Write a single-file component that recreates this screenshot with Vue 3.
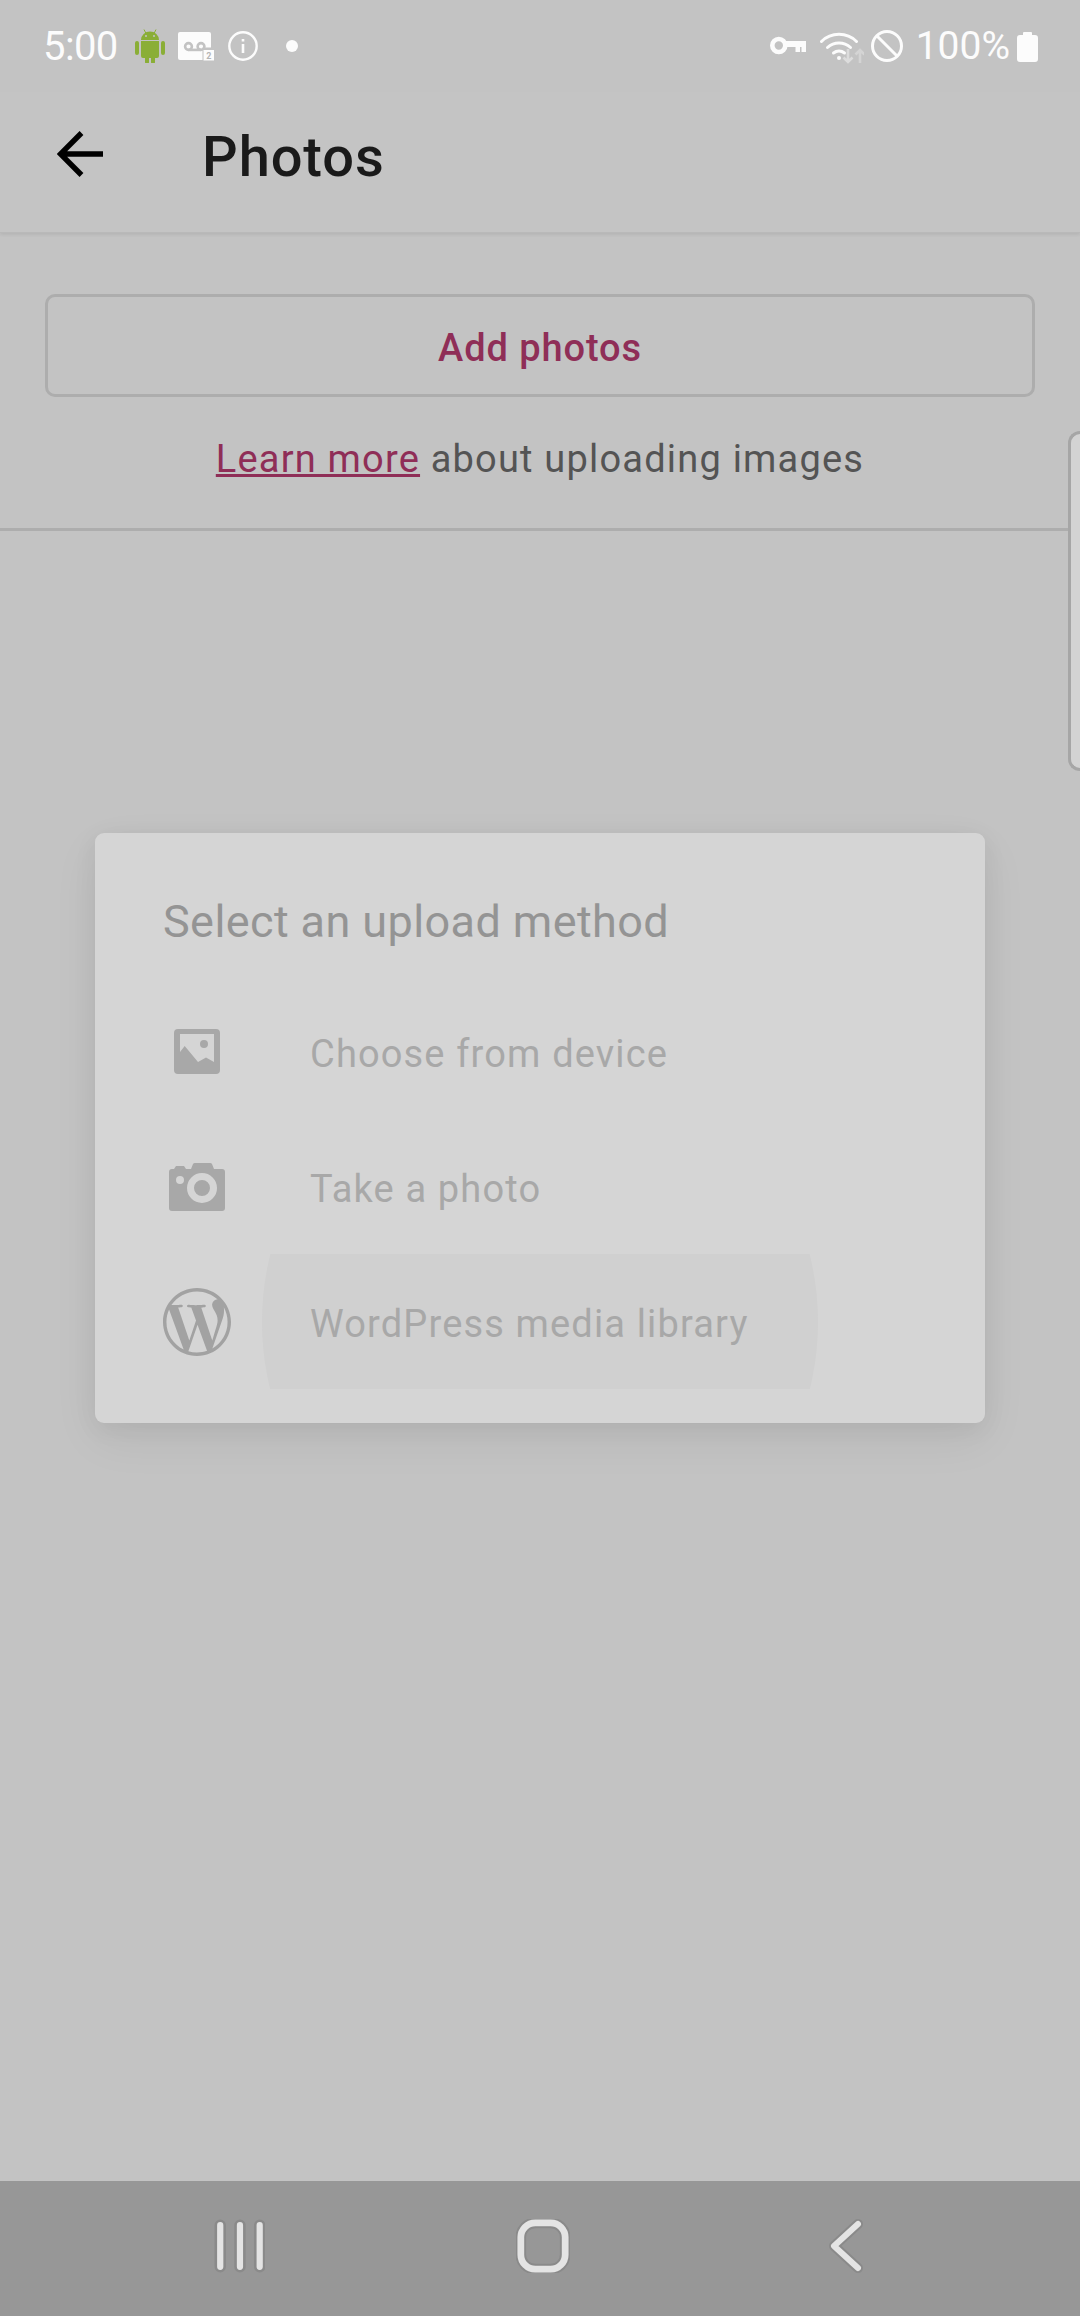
<script setup>
const rows = [
  { key: 'device', label: 'Choose from device' },
  { key: 'camera', label: 'Take a photo' },
  { key: 'wp', label: 'WordPress media library', pressed: true }
]
</script>

<template>
  <div class="screen">
    <div class="status-bar">
      <span class="clock">5:00</span>
      <svg class="ic-android" viewBox="0 0 30 34">
        <path fill="#8aae36" d="M6 11a9 8.500 0 0 1 18 0zM6 12h18v15a2 2 0 0 1-2 2h-2v4a2 2 0 0 1-4 0v-4h-2v4a2 2 0 0 1-4 0v-4H8a2 2 0 0 1-2-2zM0 14a2 2 0 0 1 4 0v10a2 2 0 0 1-4 0zM26 14a2 2 0 0 1 4 0v10a2 2 0 0 1-4 0z" />
        <path stroke="#8aae36" stroke-width="1" d="M9 0.500l2 4M21 0.500l-2 4" />
        <circle cx="11" cy="7" r="1" fill="#c3c3c3" />
        <circle cx="19" cy="7" r="1" fill="#c3c3c3" />
      </svg>
      <svg class="ic-voicemail" viewBox="0 0 36 29">
        <rect x="0" y="0" width="33" height="28" rx="2" fill="#fcfcfc" />
        <g fill="none" stroke="#c3c3c3" stroke-width="2.600">
          <circle cx="10.500" cy="14.500" r="3.400" />
          <circle cx="23" cy="14.500" r="3.400" />
          <path d="M10.500 17.900H23" />
        </g>
        <path fill="#c3c3c3" d="M24.500 15.500H33V29h-8.500z" />
        <rect x="25.500" y="18" width="10.500" height="10.500" fill="#fcfcfc" />
        <text x="30.800" y="27" class="vm-badge">2</text>
      </svg>
      <svg class="ic-info" viewBox="0 0 30 30">
        <circle cx="15" cy="15" r="13.700" fill="none" stroke="#fcfcfc" stroke-width="2.400" />
        <path fill="#fcfcfc" d="M13.700 13h2.600v9h-2.600zM13.700 8h2.600v2.600h-2.600z" />
      </svg>
      <span class="dot"></span>
      <span class="spacer"></span>
      <svg class="ic-key" viewBox="0 0 36 20">
        <circle cx="8.800" cy="9.500" r="6.500" fill="none" stroke="#fcfcfc" stroke-width="4.600" />
        <path fill="#fcfcfc" d="M15 5h21v11h-4.500v-5H30v5h-4.500v-5H15z" />
      </svg>
      <svg class="ic-wifi" viewBox="0 0 44 32">
        <g fill="none" stroke="#fcfcfc" stroke-width="3" stroke-linecap="round">
          <path d="M1.500 9.500a25 25 0 0 1 35 0" />
          <path d="M7.500 15.500a17 17 0 0 1 23 0" />
          <path d="M13.500 21a9 9 0 0 1 11 0" />
        </g>
        <circle cx="19" cy="26" r="2" fill="#fcfcfc" />
        <path fill="none" stroke="#dcdcdc" stroke-width="2.600" d="M28 17v13M23.500 25.500l4.500 4.500 4.500-4.500" />
        <path fill="none" stroke="#d4d4d4" stroke-width="2.600" d="M40 31V18M35.500 22.500l4.500-4.500 4.500 4.500" />
      </svg>
      <svg class="ic-block" viewBox="0 0 32 32">
        <circle cx="16" cy="16" r="14.500" fill="none" stroke="#fcfcfc" stroke-width="3" />
        <path stroke="#fcfcfc" stroke-width="3" d="M6 6l20 20" />
      </svg>
      <span class="battery-text">100%</span>
      <svg class="ic-battery" viewBox="0 0 21 31">
        <path fill="#fcfcfc" d="M6 2a1 1 0 0 1 1-1h7a1 1 0 0 1 1 1v2h3a3 3 0 0 1 3 3v21a3 3 0 0 1-3 3H3a3 3 0 0 1-3-3V7a3 3 0 0 1 3-3h3z" />
      </svg>
    </div>

    <header class="toolbar">
      <svg class="ic-back" viewBox="0 0 46 46">
        <path fill="none" stroke="#000" stroke-width="5.400" d="M46 23H4M24.500 2L3.500 23l21 21" />
      </svg>
      <h1 class="title">Photos</h1>
    </header>

    <section class="upload-head">
      <button class="add-btn">Add photos</button>
      <p class="learn"><a class="learn-link">Learn more</a> about uploading images</p>
    </section>

    <main class="body"></main>

    <nav class="nav-bar">
      <svg class="ic-nav" viewBox="0 0 50 52">
        <g fill="none" stroke-linecap="round">
          <path stroke="#8a8a8a" stroke-width="11" d="M6 6v40M25 6v40M44 6v40" />
          <path stroke="#e4e4e4" stroke-width="6" d="M6 6v40M25 6v40M44 6v40" />
        </g>
      </svg>
      <svg class="ic-nav" viewBox="0 0 56 56">
        <rect x="5" y="4" width="46" height="48" rx="15" fill="none" stroke="#8a8a8a" stroke-width="11" />
        <rect x="5" y="4" width="46" height="48" rx="15" fill="none" stroke="#e4e4e4" stroke-width="7" />
      </svg>
      <svg class="ic-nav" viewBox="0 0 36 54">
        <path fill="none" stroke="#8a8a8a" stroke-width="10" stroke-linecap="round" stroke-linejoin="round" d="M30 5L6 27l24 22" />
        <path fill="none" stroke="#e4e4e4" stroke-width="6" stroke-linecap="round" stroke-linejoin="round" d="M30 5L6 27l24 22" />
      </svg>
    </nav>

    <div class="side-tab"></div>

    <div class="dialog">
      <h2 class="dialog-title">Select an upload method</h2>
      <div v-for="row in rows" :key="row.key" class="row">
        <span v-if="row.pressed" class="ripple"></span>
        <span class="row-icon">
          <svg v-if="row.key === 'device'" class="ic-image" viewBox="0 0 46 45">
            <path fill="#a8a8a8" fill-rule="evenodd" d="M4 0h38a4 4 0 0 1 4 4v37a4 4 0 0 1-4 4H4a4 4 0 0 1-4-4V4a4 4 0 0 1 4-4zM6 5v18l4.700-6L24 33l8-4.500 8 4.500V5zm24 6a4 4 0 1 1 0 8 4 4 0 0 1 0-8z" />
          </svg>
          <svg v-else-if="row.key === 'camera'" class="ic-camera" viewBox="0 0 56 48">
            <path fill="#a8a8a8" fill-rule="evenodd" d="M3 6h2l2-3h8l2 3h5l2-5q.5-1 2-1h15q1.500 0 2 1l2 5h8a3 3 0 0 1 3 3v36a3 3 0 0 1-3 3H3a3 3 0 0 1-3-3V9a3 3 0 0 1 3-3zm8 7a4 4 0 1 0 0 8 4 4 0 0 0 0-8zm22-3a15 15 0 1 0 0 30 15 15 0 0 0 0-30zm0 7a8 8 0 1 1 0 16 8 8 0 0 1 0-16z" />
          </svg>
          <svg v-else class="ic-wp" viewBox="0 0 24 24">
            <path fill="#a2a2a2" d="M21.469 6.825c.84 1.537 1.318 3.3 1.318 5.175 0 3.979-2.156 7.456-5.363 9.325l3.295-9.527c.615-1.54.82-2.771.82-3.864 0-.405-.026-.78-.07-1.11m-7.981.105c.647-.03 1.232-.105 1.232-.105.582-.075.514-.93-.067-.899 0 0-1.755.135-2.88.135-1.064 0-2.85-.15-2.85-.15-.585-.03-.661.855-.075.885 0 0 .54.061 1.125.09l1.68 4.605-2.37 7.08L5.354 6.9c.649-.03 1.234-.1 1.234-.1.585-.075.516-.93-.065-.896 0 0-1.746.138-2.874.138-.2 0-.438-.008-.69-.015C4.911 3.15 8.235 1.215 12 1.215c2.809 0 5.365 1.072 7.286 2.833-.046-.003-.091-.009-.141-.009-1.06 0-1.812.923-1.812 1.914 0 .89.513 1.643 1.06 2.531.411.72.89 1.643.89 2.977 0 .915-.354 1.994-.821 3.479l-1.075 3.585-3.9-11.61.001.014zM12 22.784c-1.059 0-2.081-.153-3.048-.437l3.237-9.406 3.315 9.087c.024.053.05.101.078.149-1.12.393-2.325.609-3.582.609M1.211 12c0-1.564.336-3.05.935-4.39L7.29 21.709C3.694 19.96 1.212 16.271 1.211 12M12 0C5.385 0 0 5.385 0 12s5.385 12 12 12 12-5.385 12-12S18.615 0 12 0" />
          </svg>
        </span>
        <span class="row-label">{{ row.label }}</span>
      </div>
    </div>
  </div>
</template>

<style scoped>
.screen {
  position: relative;
  width: 1080px;
  height: 2316px;
  overflow: hidden;
  display: flex;
  flex-direction: column;
  background: #c3c3c3;
  font-family: Roboto, "Noto Sans", sans-serif;
}

.status-bar {
  height: 92px;
  flex-shrink: 0;
  display: flex;
  align-items: center;
  padding: 0 42px 0 43px;
  box-sizing: border-box;
  color: #fcfcfc;
}

.clock {
  font-size: 40px;
  letter-spacing: -0.6px;
  width: 92px;
}

.ic-android { width: 30px; height: 34px; margin-right: 13px; }
.ic-voicemail { width: 36px; height: 29px; margin-right: 14px; }
.ic-info { width: 30px; height: 30px; }
.dot { width: 12px; height: 12px; border-radius: 50%; background: #fcfcfc; margin-left: 28px; }
.spacer { flex: 1; }
.ic-key { width: 36px; height: 20px; margin-right: 14px; }
.ic-wifi { width: 44px; height: 32px; margin-right: 7px; margin-top: 3px; }
.ic-block { width: 32px; height: 32px; margin-right: 13px; }
.battery-text { font-size: 39px; margin-right: 7px; }
.ic-battery { width: 21px; height: 31px; }

.toolbar {
  height: 141px;
  flex-shrink: 0;
  display: flex;
  align-items: center;
  box-sizing: border-box;
  padding: 0 0 17px 57px;
  background: #c4c4c4;
  box-shadow: 0 2px 3px rgba(0, 0, 0, 0.07);
  border-bottom: 1px solid #b9b9b9;
}

.ic-back { width: 46px; height: 46px; margin-right: 99px; }

.title {
  margin: 6px 0 0;
  font-size: 56px;
  font-weight: 500;
  letter-spacing: 0.9px;
  color: #1a1a1a;
}

.upload-head {
  flex-shrink: 0;
  height: 298px;
  box-sizing: border-box;
  padding: 61px 45px 0;
  border-bottom: 3px solid #adadad;
}

.add-btn {
  display: block;
  width: 100%;
  height: 103px;
  box-sizing: border-box;
  background: transparent;
  border: 3px solid #adadad;
  border-radius: 10px;
  font-family: inherit;
  font-size: 38px;
  font-weight: 500;
  letter-spacing: 0.9px;
  color: #8f2e57;
  padding: 5px 0 0;
}

.learn {
  margin: 40px 0 0;
  text-align: center;
  font-size: 38px;
  letter-spacing: 1.2px;
  color: #545454;
}

.learn-link {
  color: #8f2e57;
  text-decoration: underline;
}

.body { flex: 1; }

.nav-bar {
  height: 135px;
  flex-shrink: 0;
  box-sizing: border-box;
  padding: 0 0 5px 88px;
  background: #979797;
  display: grid;
  grid-template-columns: repeat(3, 303px);
  align-items: center;
  justify-items: center;
}

.ic-nav { height: 54px; width: auto; max-width: 60px; }

.side-tab {
  position: absolute;
  right: 0;
  top: 431px;
  width: 12px;
  height: 340px;
  box-sizing: border-box;
  border: 3px solid #a6a6a6;
  border-right: none;
  border-radius: 12px 0 0 12px;
  background: #d3d3d3;
}

.dialog {
  position: absolute;
  left: 95px;
  top: 833px;
  width: 890px;
  height: 590px;
  box-sizing: border-box;
  background: #d5d5d5;
  border-radius: 9px;
  box-shadow: 0 16px 48px rgba(0, 0, 0, 0.06), 0 6px 24px rgba(0, 0, 0, 0.06);
}

.dialog-title {
  margin: 0;
  height: 151px;
  box-sizing: border-box;
  padding: 62px 0 0 68px;
  font-size: 45px;
  font-weight: 400;
  letter-spacing: 0.4px;
  color: #949494;
}

.row {
  position: relative;
  height: 135px;
  overflow: hidden;
  display: flex;
  align-items: center;
}

.ripple {
  position: absolute;
  left: 50%;
  top: 50%;
  width: 556px;
  height: 556px;
  margin: -278px 0 0 -278px;
  border-radius: 50%;
  background: #d0d0d0;
}

.row-icon {
  position: relative;
  width: 215px;
  padding: 0 79px 0 68px;
  box-sizing: border-box;
  flex-shrink: 0;
  display: flex;
  justify-content: center;
}

.row-label {
  position: relative;
  padding-top: 4px;
  font-size: 38px;
  letter-spacing: 1.15px;
  color: #a8a8a8;
}

.ic-image { width: 46px; height: 45px; }
.ic-camera { width: 56px; height: 48px; flex-shrink: 0; }
.ic-wp { width: 68px; height: 68px; flex-shrink: 0; }

.vm-badge {
  font-family: Roboto, sans-serif;
  font-size: 9px;
  font-weight: 700;
  fill: #b5b5b5;
  text-anchor: middle;
}
</style>
